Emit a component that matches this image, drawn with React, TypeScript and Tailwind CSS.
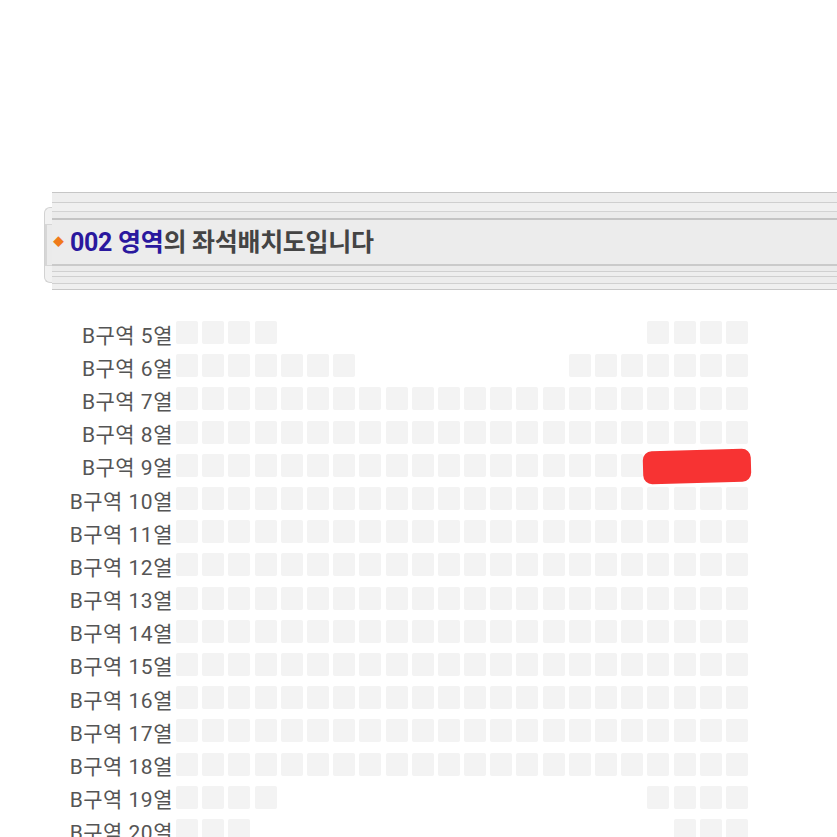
import React from "react";

type Row = { no: number; seats: number[] };

const range = (a: number, b: number) =>
  Array.from({ length: b - a + 1 }, (_, i) => a + i);

const ALL = range(0, 21);

const rows: Row[] = [
  { no: 5, seats: [...range(0, 3), ...range(18, 21)] },
  { no: 6, seats: [...range(0, 6), ...range(15, 21)] },
  ...range(7, 18).map((no) => ({ no, seats: ALL })),
  { no: 19, seats: [...range(0, 3), ...range(18, 21)] },
  { no: 20, seats: [...range(0, 2), ...range(19, 21)] },
];

function Stripe({ cls }: { cls: string }) {
  return <div className={cls} />;
}

function Header() {
  return (
    <div className="flex ml-[44px]">
      {/* left cap */}
      <div className="mt-[15px] h-[76px] w-[8px] rounded-l-[6px] border border-r-0 border-[#d2d2d2] bg-[#f1f1f1] flex items-center">
        <div className="h-[42px] w-full border-l-2 border-y border-[#d6d6d6] bg-[#ebebeb]" />
      </div>
      <div className="flex-1 flex flex-col">
        <Stripe cls="h-px bg-[#c6c6c6]" />
        <Stripe cls="h-[9px] bg-[#eeeeee]" />
        <Stripe cls="h-px bg-[#cfcfcf]" />
        <Stripe cls="h-[8px] bg-[#f0f0f0]" />
        <Stripe cls="h-px bg-[#d3d3d3]" />
        <Stripe cls="h-[6px] bg-[#ebebeb]" />
        <Stripe cls="h-[2px] bg-[#c4c4c4]" />
        <div className="h-[44px] bg-[#ececec] flex items-center">
          <span className="ml-[1px] mr-[6px] text-[#f07a1a] text-[11px] leading-none">◆</span>
          <span className="text-[25px] font-bold leading-none tracking-[-0.3px]">
            <span className="text-[#2a189e]">002 영역</span>
            <span className="text-[#444444]">의 좌석배치도입니다</span>
          </span>
        </div>
        <Stripe cls="h-[2px] bg-[#cacaca]" />
        <Stripe cls="h-[5px] bg-[#ebebeb]" />
        <Stripe cls="h-px bg-[#d0d0d0]" />
        <Stripe cls="h-[4px] bg-[#eeeeee]" />
        <Stripe cls="h-px bg-[#cfcfcf]" />
        <Stripe cls="h-[6px] bg-[#ececec]" />
        <Stripe cls="h-px bg-[#d0d0d0]" />
        <Stripe cls="h-[5px] bg-[#efefef]" />
        <Stripe cls="h-px bg-[#c8c8c8]" />
      </div>
    </div>
  );
}

function SeatRow({ row }: { row: Row }) {
  return (
    <div className="relative flex items-center h-[33.2px]">
      <div className="w-[175px] pr-[2px] text-right text-[21px] tracking-[0.5px] text-[#555555] leading-none pt-[7px] whitespace-nowrap">
        B구역 {row.no}열
      </div>
      <div className="flex gap-[4.2px] ml-[1px]">
        {ALL.map((i) => (
          <div
            key={i}
            className={
              row.seats.includes(i)
                ? "w-[22px] h-[23px] rounded-[2px] bg-[#f3f3f3]"
                : "w-[22px] h-[23px]"
            }
          />
        ))}
      </div>
      {row.no === 9 && (
        <div className="absolute left-[643px] top-[1px] w-[108px] h-[33px] rounded-[9px] bg-[#f73333] -rotate-[1.5deg]" />
      )}
    </div>
  );
}

export default function App() {
  return (
    <main
      className="w-[837px] h-[837px] overflow-hidden bg-white"
      style={{ fontFamily: 'Roboto, "Noto Sans CJK KR", sans-serif' }}
    >
      <div className="h-[192px]" />
      <Header />
      <section className="mt-[26px]">
        {rows.map((r) => (
          <SeatRow key={r.no} row={r} />
        ))}
      </section>
    </main>
  );
}
